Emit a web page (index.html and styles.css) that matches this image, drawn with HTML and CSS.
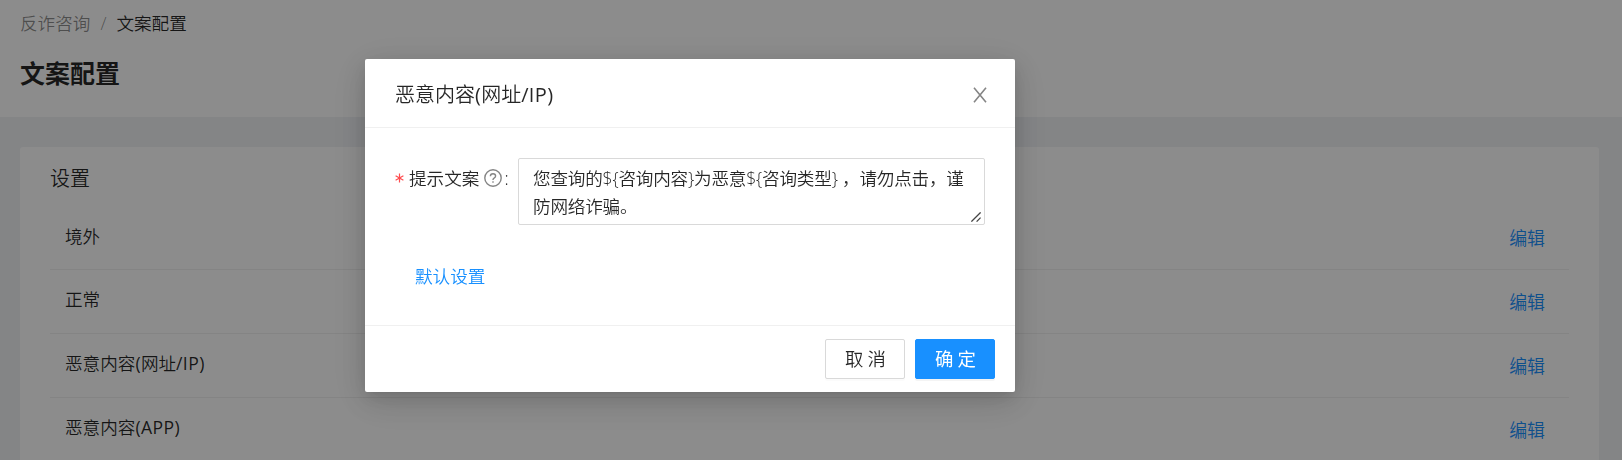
FILE: index.html
```html
<!DOCTYPE html>
<html lang="zh-CN">
<head>
<meta charset="utf-8">
<title>文案配置</title>
<link rel="stylesheet" href="styles.css">
</head>
<body>
<div class="page">
  <header class="page-header">
    <nav class="breadcrumb"><span>反诈咨询</span><span class="separator">/</span><span class="current">文案配置</span></nav>
    <h1 class="page-title">文案配置</h1>
  </header>
  <main class="card">
    <h2 class="card-title">设置</h2>
    <ul class="list">
      <li class="row"><span>境外</span><a class="edit">编辑</a></li>
      <li class="row"><span>正常</span><a class="edit">编辑</a></li>
      <li class="row"><span>恶意内容<span class="mark">(</span>网址<span class="mark">/</span><span class="latin">IP</span><span class="mark">)</span></span><a class="edit">编辑</a></li>
      <li class="row"><span>恶意内容<span class="mark">(</span><span class="latin">APP</span><span class="mark">)</span></span><a class="edit">编辑</a></li>
    </ul>
  </main>
</div>
<div class="mask">
  <section class="modal" role="dialog">
    <div class="modal-header">
      <span>恶意内容<span class="mark">(</span>网址<span class="mark">/</span><span class="latin">IP</span><span class="mark">)</span></span>
      <svg class="close" viewBox="0 0 14 16" width="14" height="16"><path d="M1 .8 13 15.2M13 .8 1 15.2"/></svg>
    </div>
    <div class="modal-body">
      <div class="field">
        <label class="label"><svg class="required" viewBox="0 0 9 10" width="9" height="10"><path d="M4.5 .5v9M.6 2.7l7.8 4.6M8.4 2.7.6 7.3"/></svg><span class="label-text">提示文案</span><svg class="help" viewBox="0 0 18 18" width="18" height="18"><circle cx="9" cy="9" r="8.2"/><path d="M6.4 7.2C6.4 5.6 7.5 4.7 9 4.7s2.6.9 2.6 2.3c0 1.1-.7 1.7-1.5 2.1-.8.4-1.1.8-1.1 1.7v.3"/><path d="M9 12.3v1.5"/></svg><span class="colon">:</span></label>
        <div class="control">
          <textarea class="textarea" spellcheck="false">您查询的${咨询内容}为恶意${咨询类型} ，请勿点击，谨防网络诈骗。</textarea>
          <svg class="grip" viewBox="0 0 10 10" width="10" height="10"><path d="M.4 9.6 9.6.4M5.6 9.6l4-4"/></svg>
        </div>
      </div>
      <a class="default-link">默认设置</a>
    </div>
    <div class="modal-footer">
      <button class="button">取消</button>
      <button class="button primary">确定</button>
    </div>
  </section>
</div>
</body>
</html>
```
FILE: styles.css
```css
* { box-sizing: border-box; }
html, body { height: 100%; }
body {
  margin: 0;
  overflow: hidden;
  font: 350 17.6px/27.5px "Open Sans", "Noto Sans CJK SC", sans-serif;
  color: rgba(0, 0, 0, .85);
}
.page { height: 460px; overflow: hidden; background: #f0f2f5; }
.page-header { height: 117px; padding: 10px 20px 0; background: #fff; }
.breadcrumb { display: flex; color: rgba(0, 0, 0, .45); }
.separator { margin: 0 10px; }
.current { color: rgba(0, 0, 0, .85); }
.page-title { margin: 15px 0 0; font-size: 25px; line-height: 40px; font-weight: 700; }
.card { height: 400px; margin: 30px 23px 0 20px; padding: 16px 30px; background: #fff; border-radius: 3px; }
.card-title { margin: 0; font-size: 20px; line-height: 31px; font-weight: 350; }
.list { margin: 12px 0 0; padding: 0; list-style: none; }
.row { display: flex; justify-content: space-between; height: 64px; padding: 16px 24px 0 15px; border-bottom: 1px solid #f0f0f0; }
.row:first-child { padding-top: 17px; }
.latin { font-weight: 500; letter-spacing: .4px; }
.mark { font-weight: 400; letter-spacing: .3px; }
.edit { padding-top: 3px; color: #1890ff; font-size: 17.9px; }
.row:first-child .edit { padding-top: 2px; }
.mask { position: fixed; inset: 0; display: flex; justify-content: center; align-items: flex-start; padding: 59px 242px 0 0; background: rgba(0, 0, 0, .45); }
.modal { width: 650px; height: 333px; background: #fff; border-radius: 2px; box-shadow: 0 3px 6px -4px rgba(0, 0, 0, .12), 0 6px 16px rgba(0, 0, 0, .08), 0 9px 28px 8px rgba(0, 0, 0, .05), 0 8px 40px rgba(0, 0, 0, .12); }
.modal-header { display: flex; justify-content: space-between; align-items: center; height: 69px; padding: 3px 28px 0 30px; border-bottom: 1px solid #f0f0f0; font-size: 20px; }
.close { fill: none; stroke: #858585; stroke-width: 1.6; }
.modal-body { height: 197px; padding: 30px; }
.field { display: flex; }
.label { display: flex; align-items: center; width: 123px; height: 42px; }
.required { margin: 0 5px 2px 0; fill: none; stroke: #ff4d4f; stroke-width: 1.2; }
.help { margin: 0 0 2px 5px; fill: none; stroke: #858585; stroke-width: 1.4; }
.colon { margin-left: 2px; }
.control { position: relative; }
.textarea { display: block; width: 467px; height: 67px; padding: 6px 13px 4px 14px; border: 1px solid #d9d9d9; border-radius: 2px; outline: none; overflow: hidden; resize: none; background: #fff; color: inherit; font: inherit; letter-spacing: -.2px; }
.grip { position: absolute; right: 4px; bottom: 3px; fill: none; stroke: #444; stroke-width: 1.3; }
.default-link { display: block; width: max-content; margin: 38px 0 0 20px; color: #1890ff; }
.modal-footer { display: flex; justify-content: flex-end; gap: 10px; padding: 13px 20px; border-top: 1px solid #f0f0f0; }
.button { width: 80px; height: 40px; padding: 0 0 0 5px; border: 1px solid #d9d9d9; border-radius: 2px; background: #fff; box-shadow: 0 2px 0 rgba(0, 0, 0, .015); color: inherit; font: inherit; font-size: 18.4px; letter-spacing: 4px; }
.primary { border-color: #1890ff; background: #1890ff; color: #fff; font-weight: 400; box-shadow: 0 2px 0 rgba(0, 0, 0, .045); }
```
